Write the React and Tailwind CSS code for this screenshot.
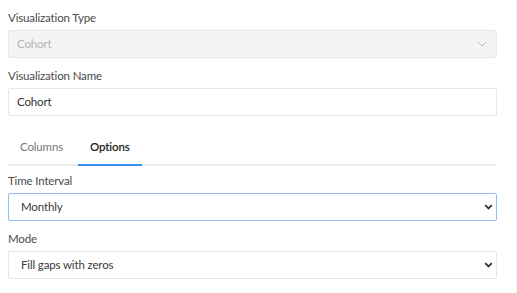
import React, { useState } from 'react';

const font = { fontFamily: 'Lato, "Liberation Sans", sans-serif' };

const ThinChevron = () => (
  <svg width="10" height="6" viewBox="0 0 10 6" fill="none" className="text-[#b8b8b8]">
    <path d="M1 1l4 4 4-4" stroke="currentColor" strokeWidth="1" />
  </svg>
);

const BoldChevron = () => (
  <svg width="9" height="6" viewBox="0 0 9 6" fill="none" className="text-[#333]">
    <path d="M1.2 1.2l3.3 3.3 3.3-3.3" stroke="currentColor" strokeWidth="1.8" />
  </svg>
);

const Label = ({ children }) => (
  <div className="h-4 leading-4 text-[11.5px] tracking-[-0.15px] text-[#4a4a4a] mb-1">{children}</div>
);

const SelectBox = ({ value, focused }) => (
  <div
    className={
      'h-[28px] flex items-center justify-between pl-[12px] pr-[3px] rounded-[2px] bg-white text-[11.5px] tracking-[-0.15px] text-[#3a3a3a] border ' +
      (focused ? 'border-[#8fbcf3]' : 'border-[#e6e6e6]')
    }
  >
    <span>{value}</span>
    <BoldChevron />
  </div>
);

export default function App() {
  const [tab, setTab] = useState('options');

  return (
    <div className="w-[517px] h-[293px] bg-white border-r border-[#efefef] pl-2 pr-[19px] pt-[10px]" style={font}>
      {/* Visualization type */}
      <Label>Visualization Type</Label>
      <div className="h-[28px] flex items-center justify-between px-2 pr-[9px] bg-[#f4f4f4] border border-[#e8e8e8] rounded-[2px] text-[11.5px] tracking-[-0.15px] text-[#b5b5b5]">
        <span>Cohort</span>
        <ThinChevron />
      </div>

      <div className="mt-[10px]">
        <Label>Visualization Name</Label>
        <div className="h-[28px] flex items-center px-2 bg-white border border-[#e6e6e6] rounded-[2px] text-[11.5px] tracking-[-0.15px] text-[#333]">
          Cohort
        </div>
      </div>

      {/* Tabs */}
      <div className="mt-[15px] flex border-b-2 border-[#ececec]">
        <button
          onClick={() => setTab('columns')}
          className={
            'px-3 pt-2 pb-[9px] -mb-[2px] border-b-2 leading-4 text-[11.5px] tracking-[-0.15px] ' +
            (tab === 'columns' ? 'border-[#3d8ff0] text-[#222] font-semibold' : 'border-transparent text-[#777]')
          }
        >
          Columns
        </button>
        <button
          onClick={() => setTab('options')}
          className={
            'ml-[3px] px-3 pt-2 pb-[9px] -mb-[2px] border-b-2 leading-4 text-[11.5px] tracking-[-0.15px] ' +
            (tab === 'options' ? 'border-[#3d8ff0] text-[#222] font-semibold' : 'border-transparent text-[#777]')
          }
        >
          Options
        </button>
      </div>

      <div className="mt-[7px]">
        <Label>Time Interval</Label>
        <SelectBox value="Monthly" focused />
      </div>

      <div className="mt-[10px]">
        <Label>Mode</Label>
        <SelectBox value="Fill gaps with zeros" />
      </div>
    </div>
  );
}
